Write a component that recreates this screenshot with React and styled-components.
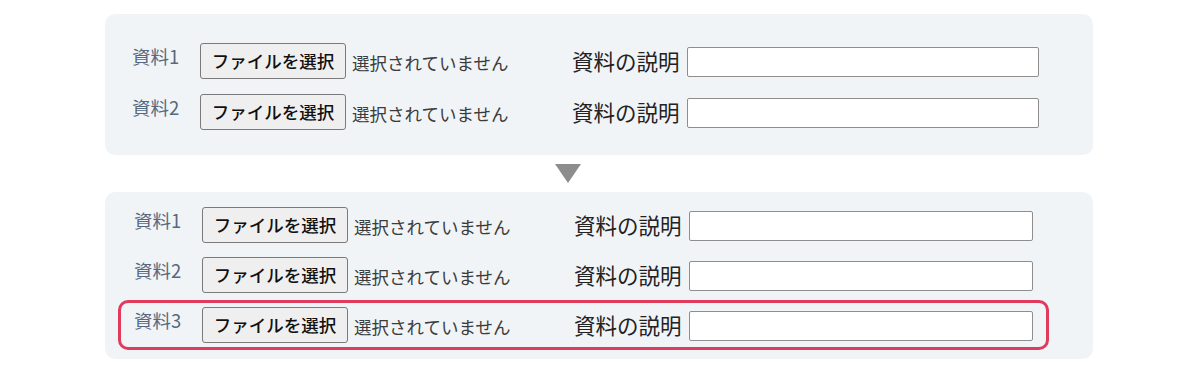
import React from "react";
import styled, { createGlobalStyle } from "styled-components";

const Global = createGlobalStyle`
  html, body { margin: 0; padding: 0; background: #ffffff; }
  body { font-family: "Noto Sans CJK JP", "Noto Sans", sans-serif; }
`;

const Page = styled.div`
  width: 1200px;
  height: 374px;
  padding: 14px 0 0 105px;
  box-sizing: border-box;
  display: flex;
  flex-direction: column;
`;

const Panel = styled.div`
  width: 988px;
  box-sizing: border-box;
  background: #f1f4f7;
  border-radius: 10px;
  display: flex;
  flex-direction: column;
  gap: ${(p) => p.$gap}px;
  padding: ${(p) => p.$pad};
`;

const Row = styled.div`
  display: flex;
  align-items: center;
  box-sizing: border-box;
  width: ${(p) => (p.$width ? `${p.$width}px` : "auto")};
  height: ${(p) => p.$h}px;
  border: ${(p) => p.$bw}px solid ${(p) => (p.$hl ? "#e13a5d" : "transparent")};
  border-radius: 10px;
  padding: 0 0 0 ${(p) => p.$pl}px;
`;

const Label = styled.span`
  width: 68px;
  flex: none;
  font-size: 18.5px;
  color: #56697f;
  padding-bottom: 9px;
  line-height: 1;
`;

const FileArea = styled.div`
  width: 372px;
  flex: none;
  display: flex;
  align-items: center;
  gap: 6px;
`;

const FileButton = styled.button`
  width: 146px;
  height: 36px;
  box-sizing: border-box;
  background: #efefef;
  border: 1px solid #7a7a7a;
  border-radius: 3px;
  font-family: "Noto Sans CJK JP", sans-serif;
  font-size: 17.5px;
  font-weight: 500;
  color: #111;
  padding: 0;
  line-height: 1;
`;

const NoFile = styled.span`
  font-size: 17.5px;
  color: #3c3c3c;
  line-height: 1;
  padding-top: 3px;
`;

const DescLabel = styled.span`
  font-size: 21.5px;
  color: #222;
  line-height: 1;
  margin-right: 7px;
  white-space: nowrap;
`;

const TextInput = styled.input`
  width: ${(p) => p.$w}px;
  height: 30px;
  box-sizing: border-box;
  background: #fff;
  border: 1px solid #8e8e8e;
  border-radius: 2px;
  margin-top: 1px;
`;

const Arrow = styled.div`
  margin: 9px 0 9px 450px;
  width: 0;
  height: 0;
  border-left: 13px solid transparent;
  border-right: 13px solid transparent;
  border-top: 19px solid #8d8d8d;
`;

function FileRow({ n, inputW, rowProps }) {
  return (
    <Row {...rowProps}>
      <Label>資料{n}</Label>
      <FileArea>
        <FileButton type="button">ファイルを選択</FileButton>
        <NoFile>選択されていません</NoFile>
      </FileArea>
      <DescLabel>資料の説明</DescLabel>
      <TextInput $w={inputW} />
    </Row>
  );
}

export default function App() {
  return (
    <>
      <Global />
      <Page>
        <Panel $gap={15} $pad="29px 0 25px 0">
          {[1, 2].map((n) => (
            <FileRow key={n} n={n} inputW={352} rowProps={{ $h: 36, $bw: 0, $pl: 27 }} />
          ))}
        </Panel>
        <Arrow />
        <Panel $gap={0} $pad="8px 0 9px 13px">
          {[1, 2, 3].map((n) => (
            <FileRow
              key={n}
              n={n}
              inputW={344}
              rowProps={{ $h: 50, $bw: 3, $pl: 13, $width: 931, $hl: n === 3 }}
            />
          ))}
        </Panel>
      </Page>
    </>
  );
}
